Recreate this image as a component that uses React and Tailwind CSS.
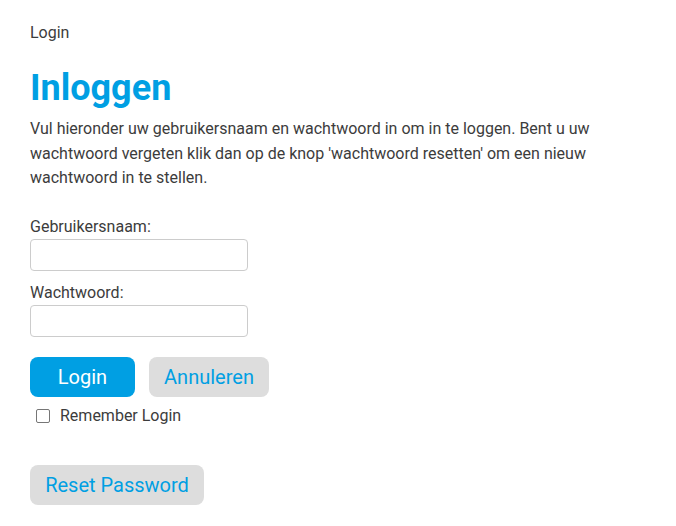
import { useState } from 'react';

const App = () => {
  const [remember, setRemember] = useState(false);

  return (
    <div className="min-h-screen bg-white px-[30px] pt-[23px] text-[16px] text-[#3c3c3c] font-['Roboto',sans-serif]">
      <div className="leading-[20px]">Login</div>

      <h1 className="mt-[23px] text-[36px] font-bold leading-[44px] text-[#009fe3]">Inloggen</h1>

      <p className="mt-[7px] max-w-[600px] leading-[24.5px]">
        Vul hieronder uw gebruikersnaam en wachtwoord in om in te loggen. Bent u uw wachtwoord vergeten klik dan op de knop 'wachtwoord resetten' om een nieuw wachtwoord in te stellen.
      </p>

      <form className="mt-[26px]" onSubmit={(e) => e.preventDefault()}>
        <label className="block leading-[20px]">Gebruikersnaam:</label>
        <input type="text" className="mt-[2px] block h-[32px] w-[218px] rounded-[4px] border border-[#cccccc] bg-white px-2 outline-none" />

        <label className="mt-[12px] block leading-[20px]">Wachtwoord:</label>
        <input type="password" className="mt-[2px] block h-[32px] w-[218px] rounded-[4px] border border-[#cccccc] bg-white px-2 outline-none" />

        <div className="mt-[20px] flex gap-[14px]">
          <button type="submit" className="h-[40px] w-[105px] rounded-[8px] bg-[#009fe3] text-[20px] text-white">Login</button>
          <button type="button" className="h-[40px] w-[120px] rounded-[8px] bg-[#dddddd] text-[20px] text-[#009fe3]">Annuleren</button>
        </div>

        <label className="mt-[9px] flex items-center gap-[10px] pl-[6px] leading-[20px]">
          <input
            type="checkbox"
            checked={remember}
            onChange={() => setRemember(!remember)}
            className="h-[14px] w-[14px] appearance-none rounded-[2px] border border-[#767676] bg-white"
          />
          Remember Login
        </label>

        <button type="button" className="mt-[39px] h-[40px] w-[174px] rounded-[8px] bg-[#dddddd] text-[20px] text-[#009fe3]">Reset Password</button>
      </form>
    </div>
  );
};

export default App;
